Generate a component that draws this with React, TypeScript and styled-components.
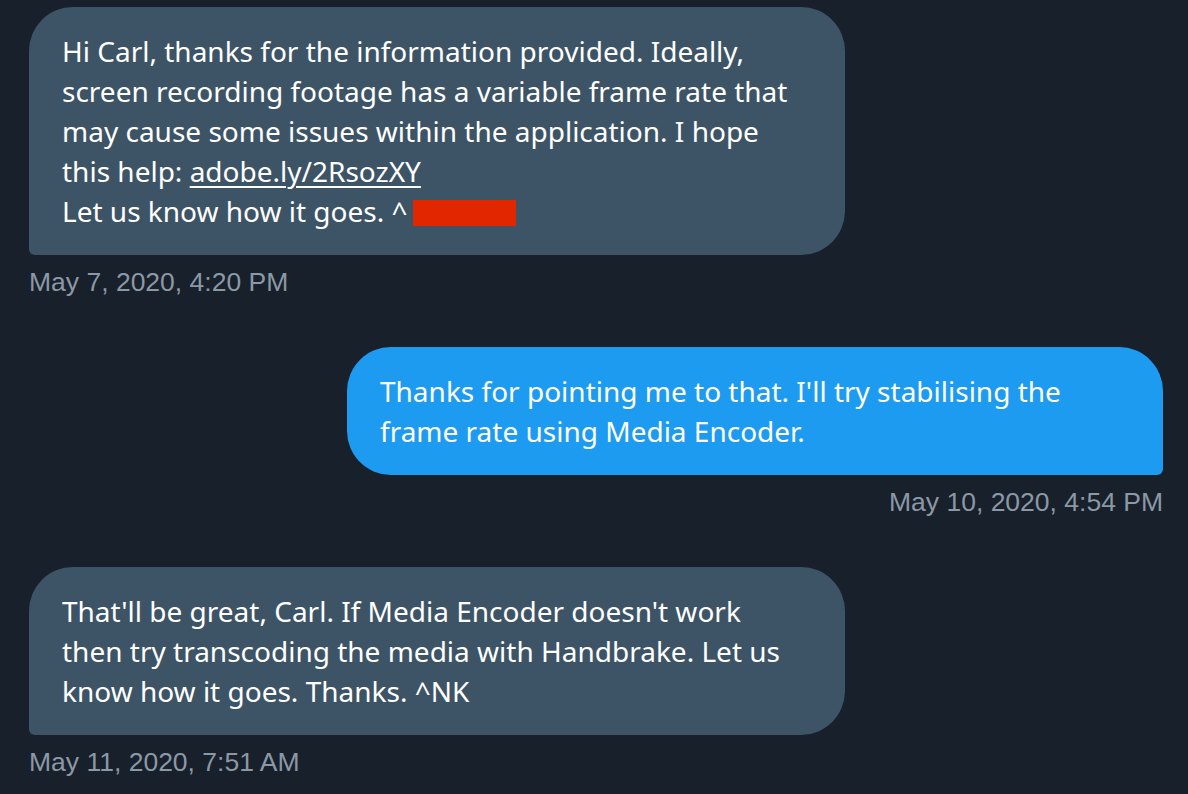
import React from "react";
import styled, { createGlobalStyle } from "styled-components";

const Global = createGlobalStyle`
  html, body { margin: 0; padding: 0; background: #18202b; }
  body { width: 1188px; height: 794px; overflow: hidden; }
`;

const Thread = styled.div`
  display: flex;
  flex-direction: column;
  gap: 50px;
  padding: 7px 25px 0 29px;
`;

const Group = styled.div<{ $mine?: boolean }>`
  display: flex;
  flex-direction: column;
  align-items: ${(p) => (p.$mine ? "flex-end" : "flex-start")};
`;

const Bubble = styled.div<{ $mine?: boolean }>`
  width: 816px;
  box-sizing: border-box;
  padding: 24px 28px 24px 33px;
  background: ${(p) => (p.$mine ? "#1d9bf0" : "#3d5466")};
  color: #ffffff;
  font-family: "Noto Sans", "Open Sans", sans-serif;
  font-size: 28px;
  line-height: 40px;
  border-radius: ${(p) => (p.$mine ? "44px 44px 6px 44px" : "44px 44px 44px 6px")};
`;

const Link = styled.span`
  text-decoration: underline;
  text-underline-offset: 4px;
  text-decoration-thickness: 2px;
`;

const Redacted = styled.span`
  display: inline-block;
  width: 103px;
  height: 26px;
  margin-left: 5px;
  background: #e22600;
  vertical-align: -4px;
`;

const Time = styled.div`
  margin-top: 12px;
  font-family: "Liberation Sans", Arial, sans-serif;
  font-size: 26.5px;
  line-height: 30px;
  color: #8b98a5;
`;

export default function App() {
  return (
    <>
      <Global />
      <Thread>
        <Group>
          <Bubble>
            Hi Carl, thanks for the information provided. Ideally,
            <br />
            screen recording footage has a variable frame rate that
            <br />
            may cause some issues within the application. I hope
            <br />
            this help: <Link>adobe.ly/2RsozXY</Link>
            <br />
            Let us know how it goes. ^<Redacted />
          </Bubble>
          <Time>May 7, 2020, 4:20 PM</Time>
        </Group>
        <Group $mine>
          <Bubble $mine>
            Thanks for pointing me to that. I'll try stabilising the
            <br />
            frame rate using Media Encoder.
          </Bubble>
          <Time>May 10, 2020, 4:54 PM</Time>
        </Group>
        <Group>
          <Bubble>
            That'll be great, Carl. If Media Encoder doesn't work
            <br />
            then try transcoding the media with Handbrake. Let us
            <br />
            know how it goes. Thanks. ^NK
          </Bubble>
          <Time>May 11, 2020, 7:51 AM</Time>
        </Group>
      </Thread>
    </>
  );
}
